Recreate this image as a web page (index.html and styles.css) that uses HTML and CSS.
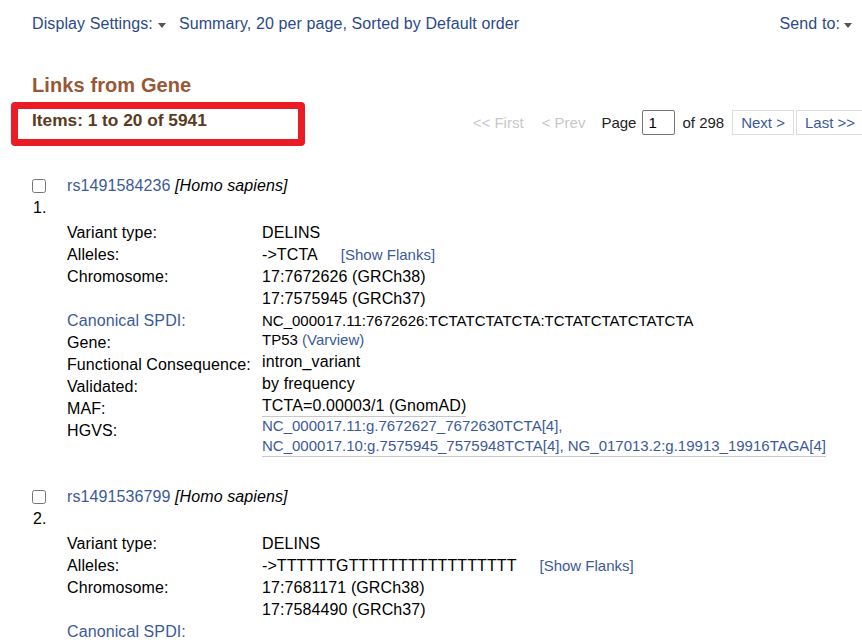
FILE: index.html
```html
<!DOCTYPE html>
<html lang="en">
<head>
<meta charset="utf-8">
<title>Links from Gene</title>
<link rel="stylesheet" href="styles.css">
</head>
<body>
<div class="page">
  <div class="topbar">
    <div class="ds">
      <span>Display Settings:</span><span class="caret"></span>
      <span class="summary">Summary, 20 per page, Sorted by Default order</span>
    </div>
    <div class="ds">
      <span>Send to:</span><span class="caret caret-send"></span>
    </div>
  </div>

  <h2 class="heading">Links from Gene</h2>

  <div class="pager-row">
    <h3 class="items-count">Items: 1 to 20 of 5941</h3>
    <div class="pager">
      <span class="pg-off pg-first">&lt;&lt; First</span>
      <span class="pg-off pg-prev">&lt; Prev</span>
      <span>Page</span>
      <input class="pg-input" type="text" value="1">
      <span>of 298</span>
      <span class="pg-btn pg-next">Next &gt;</span>
      <span class="pg-btn">Last &gt;&gt;</span>
    </div>
  </div>

  <div class="results">
    <div class="item">
      <input class="item-check" type="checkbox">
      <div class="item-title"><a class="link">rs1491584236</a> <i>[Homo sapiens]</i></div>
      <div class="item-num">1.</div>
      <div class="details">
        <div class="lab">Variant type:</div><div class="val">DELINS</div>
        <div class="lab">Alleles:</div><div class="val">-&gt;TCTA<a class="link flanks">[Show Flanks]</a></div>
        <div class="lab">Chromosome:</div><div class="val">17:7672626 (GRCh38)<br>17:7575945 (GRCh37)</div>
        <div class="lab link">Canonical SPDI:</div><div class="val small">NC_000017.11:7672626:TCTATCTATCTA:TCTATCTATCTATCTA</div>
        <div class="lab">Gene:</div><div class="val small up">TP53 <a class="link">(Varview)</a></div>
        <div class="lab">Functional Consequence:</div><div class="val up">intron_variant</div>
        <div class="lab">Validated:</div><div class="val up">by frequency</div>
        <div class="lab">MAF:</div><div class="val maf underlined">TCTA=0.00003/1 (GnomAD)</div>
        <div class="lab">HGVS:</div><div class="val small hgvs underlined link">NC_000017.11:g.7672627_7672630TCTA[4],<br>NC_000017.10:g.7575945_7575948TCTA[4], NG_017013.2:g.19913_19916TAGA[4]</div>
      </div>
    </div>

    <div class="item">
      <input class="item-check" type="checkbox">
      <div class="item-title"><a class="link">rs1491536799</a> <i>[Homo sapiens]</i></div>
      <div class="item-num">2.</div>
      <div class="details">
        <div class="lab">Variant type:</div><div class="val">DELINS</div>
        <div class="lab">Alleles:</div><div class="val">-&gt;TTTTTTGTTTTTTTTTTTTTTTTT<a class="link flanks">[Show Flanks]</a></div>
        <div class="lab">Chromosome:</div><div class="val">17:7681171 (GRCh38)<br>17:7584490 (GRCh37)</div>
        <div class="lab link">Canonical SPDI:</div><div class="val small"></div>
      </div>
    </div>
  </div>

  <div class="highlight"></div>
</div>
</body>
</html>
```
FILE: styles.css
```css
* { box-sizing: border-box; }
html, body { margin: 0; padding: 0; background: #fff; }
body {
  font-family: "Liberation Sans", Arial, sans-serif;
  font-size: 16px;
  letter-spacing: 0.1px;
  color: #000;
  width: 862px;
  height: 642px;
  overflow: hidden;
}
.page { position: relative; }

.topbar {
  display: flex;
  justify-content: space-between;
  padding: 14px 10px 0 32px;
  line-height: 20px;
  color: #2b4a8a;
}
.ds { display: flex; align-items: center; }
.caret {
  display: inline-block;
  width: 0; height: 0;
  border-left: 4px solid transparent;
  border-right: 4px solid transparent;
  border-top: 5px solid #555;
  margin-left: 5px;
  margin-top: 2px;
}
.caret-send { margin-left: 4px; }
.summary { margin-left: 13px; }

.heading {
  margin: 39px 0 0 32px;
  font-size: 20px;
  line-height: 24px;
  font-weight: bold;
  color: #985735;
}

.pager-row {
  display: flex;
  justify-content: space-between;
  align-items: flex-start;
  margin: 13px -2px 0 0;
  padding-left: 32px;
}
.items-count {
  margin: 0;
  font-size: 17.3px;
  line-height: 20px;
  font-weight: bold;
  color: #5a3b1e;
  letter-spacing: 0;
}
.pager {
  display: flex;
  align-items: center;
  height: 25px;
  font-size: 15px;
  color: #222;
  letter-spacing: 0;
}
.pg-off { color: #c8c8c8; }
.pg-first { margin-right: 18px; }
.pg-prev { margin-right: 16px; }
.pg-input {
  width: 33px;
  height: 25px;
  margin: 0 7px 0 6px;
  padding: 0 5px;
  border: 1px solid #767676;
  border-radius: 2px;
  font: 15px "Liberation Sans", Arial, sans-serif;
  color: #000;
}
.pg-btn {
  height: 25px;
  line-height: 23px;
  padding: 0 8px;
  border: 1px solid #ddd;
  color: #3b5a9a;
}
.pg-next { margin: 0 2px 0 8px; }

.results { margin-top: 40px; }
.item {
  display: grid;
  grid-template-columns: 36px 1fr;
  padding-left: 31px;
  margin-bottom: 29px;
  line-height: 22px;
}
.item-check {
  grid-column: 1;
  grid-row: 1;
  width: 14px;
  height: 14px;
  margin: 0 0 0 1px;
  align-self: center;
}
.item-title { grid-column: 2; grid-row: 1; }
.item-num { grid-column: 1 / span 2; grid-row: 2; padding-left: 2px; }
.link { color: #3b5a9a; text-decoration: none; }

.details {
  grid-column: 2;
  grid-row: 3;
  margin-top: 3px;
  display: grid;
  grid-template-columns: 195px auto;
  justify-content: start;
  align-items: start;
}
.val.small { font-size: 15px; letter-spacing: 0; }
.val.up { margin-top: -3px; }
.underlined { justify-self: start; border-bottom: 1px solid #c8c8c8; }
.val.maf { line-height: 20px; margin-top: -2px; }
.val.hgvs { line-height: 20px; margin-top: -4px; }
.flanks { font-size: 15px; margin-left: 23px; letter-spacing: 0; }

.highlight {
  position: absolute;
  left: 11px;
  top: 102px;
  width: 294px;
  height: 44px;
  border: 7px solid #ec1c24;
  border-radius: 4px;
}
```
